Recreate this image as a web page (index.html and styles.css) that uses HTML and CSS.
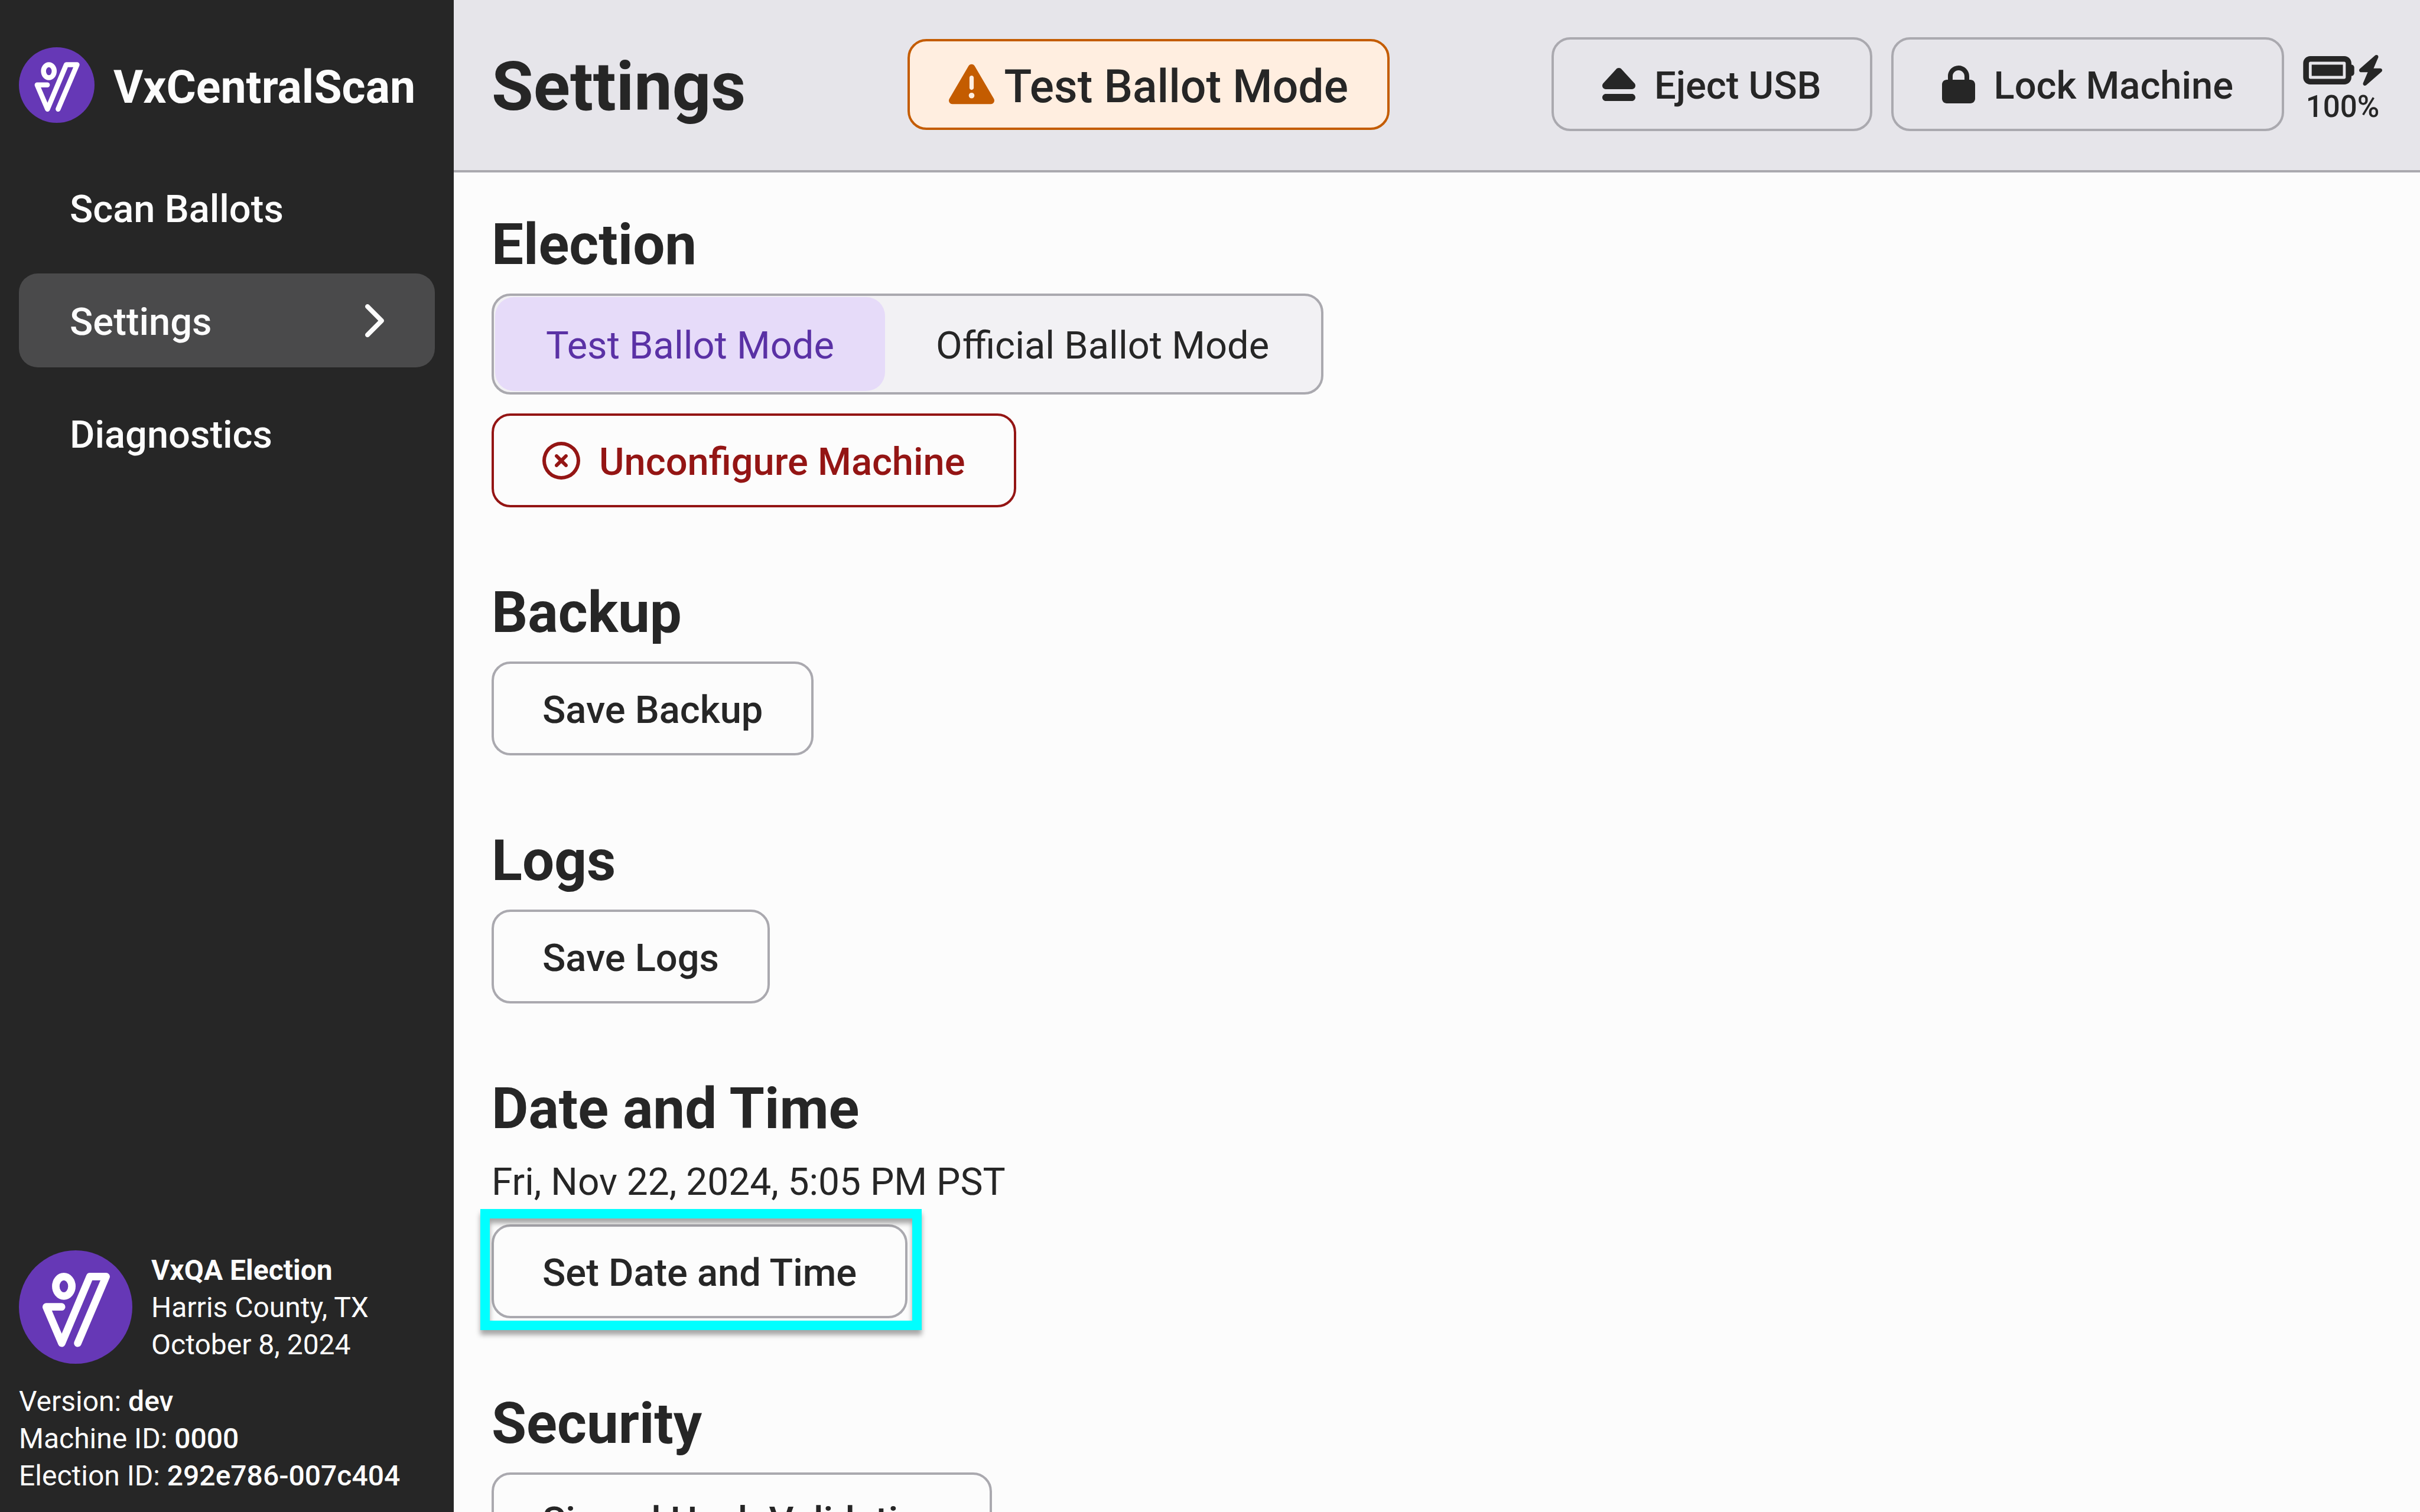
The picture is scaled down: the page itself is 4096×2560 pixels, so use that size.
FILE: index.html
```html
<!DOCTYPE html>
<html lang="en">
<head>
<meta charset="utf-8">
<title>VxCentralScan – Settings</title>
<link rel="stylesheet" href="styles.css">
</head>
<body>
<svg class="defs" aria-hidden="true">
  <symbol id="logo" viewBox="30 37 606 606">
    <circle cx="333" cy="340" r="303" fill="#6638b6"/>
    <g fill="none" stroke="#fff" stroke-width="40" stroke-linecap="round" stroke-linejoin="round">
      <ellipse cx="270" cy="229" rx="43" ry="52"/>
      <path d="M258 339H176L259 533L409 177H496L344 533"/>
    </g>
  </symbol>
</svg>
<div class="app">
  <aside class="sidebar">
    <div class="brand">
      <svg class="brand-logo" aria-hidden="true"><use href="#logo"/></svg>
      <span class="brand-name">VxCentralScan</span>
    </div>
    <nav class="nav">
      <a class="nav-item" href="#scan"><span class="label">Scan Ballots</span></a>
      <a class="nav-item nav-item-active" href="#settings" aria-current="page"><span class="label">Settings</span>
        <svg class="chevron" viewBox="0 0 320 512" aria-hidden="true"><path d="M310.6 233.4c12.5 12.5 12.5 32.8 0 45.3l-192 192c-12.5 12.5-32.8 12.5-45.3 0s-12.5-32.8 0-45.3L242.7 256 73.4 86.6c-12.5-12.5-12.5-32.8 0-45.3s32.8-12.5 45.3 0l192 192z"/></svg>
      </a>
      <a class="nav-item" href="#diagnostics"><span class="label">Diagnostics</span></a>
    </nav>
    <footer class="info">
      <div class="election">
        <svg class="election-seal" aria-hidden="true"><use href="#logo"/></svg>
        <div>
          <div><b>VxQA Election</b></div>
          <div>Harris County, TX</div>
          <div>October 8, 2024</div>
        </div>
      </div>
      <div>
        <div>Version: <strong>dev</strong></div>
        <div>Machine ID: <strong>0000</strong></div>
        <div>Election ID: <strong>292e786-007c404</strong></div>
      </div>
    </footer>
  </aside>
  <div class="screen">
    <header class="header">
      <h1 class="title">Settings</h1>
      <div class="mode-badge">
        <svg class="warning" viewBox="0 0 512 512" aria-hidden="true"><path d="M256 32c14.2 0 27.3 7.5 34.5 19.8l216 368c7.3 12.4 7.3 27.7 .2 40.1S486.3 480 472 480H40c-14.3 0-27.6-7.7-34.7-20.1s-7-27.8 .2-40.1l216-368C228.7 39.5 241.8 32 256 32zm0 128c-13.3 0-24 10.7-24 24V296c0 13.3 10.7 24 24 24s24-10.7 24-24V184c0-13.3-10.7-24-24-24zm32 224a32 32 0 1 0 -64 0 32 32 0 1 0 64 0z"/></svg>
        <span class="mode-name">Test Ballot Mode</span>
      </div>
      <div class="actions">
        <button class="button" type="button">
          <svg class="icon-narrow" viewBox="0 0 448 512" aria-hidden="true"><path d="M224 32c13.5 0 26.3 5.6 35.4 15.6l176 192c12.9 14 16.2 34.3 8.6 51.8S419 320 400 320H48c-19 0-36.3-11.2-43.9-28.7s-4.3-37.7 8.6-51.8l176-192C197.7 37.6 210.5 32 224 32zM0 432c0-26.5 21.5-48 48-48H400c26.5 0 48 21.5 48 48s-21.5 48-48 48H48c-26.5 0-48-21.5-48-48z"/></svg>
          <span class="label">Eject USB</span>
        </button>
        <button class="button" type="button">
          <svg class="icon-narrow" viewBox="0 0 448 512" aria-hidden="true"><path d="M144 144v48H304V144c0-44.2-35.8-80-80-80s-80 35.8-80 80zM80 192V144C80 64.5 144.5 0 224 0s144 64.5 144 144v48h16c35.3 0 64 28.7 64 64V448c0 35.3-28.7 64-64 64H64c-35.3 0-64-28.7-64-64V256c0-35.3 28.7-64 64-64H80z"/></svg>
          <span class="label">Lock Machine</span>
        </button>
        <div class="power">
          <div class="power-icons">
            <svg class="battery" viewBox="0 96 576 320" aria-hidden="true"><path d="M464 160c8.800 0 16 7.200 16 16V336c0 8.800-7.200 16-16 16H80c-8.800 0-16-7.200-16-16V176c0-8.800 7.200-16 16-16H464zM80 96C35.800 96 0 131.800 0 176V336c0 44.200 35.800 80 80 80H464c44.200 0 80-35.800 80-80V320c17.700 0 32-14.300 32-32V224c0-17.700-14.300-32-32-32V176c0-44.200-35.800-80-80-80H80zm368 96H96V320H448V192z"/></svg>
            <svg class="bolt" viewBox="32 0 384 512" aria-hidden="true"><path d="M349.4 44.6c5.9-13.7 1.5-29.7-10.6-38.5s-28.6-8-39.9 1.8l-256 224c-10 8.8-13.6 22.9-8.9 35.3S50.7 288 64 288H175.500L98.6 467.4c-5.9 13.7-1.5 29.7 10.6 38.5s28.6 8 39.9-1.8l256-224c10-8.8 13.6-22.9 8.900-35.300s-16.600-20.700-30-20.700H272.500L349.400 44.600z"/></svg>
          </div>
          <span>100%</span>
        </div>
      </div>
    </header>
    <main class="content">
      <section class="section">
        <h2 class="heading">Election</h2>
        <div class="stack">
          <div class="segmented" role="radiogroup" aria-label="Ballot mode">
            <label class="segment"><input class="segment-input" type="radio" name="mode" checked><span class="label">Test Ballot Mode</span></label>
            <label class="segment"><input class="segment-input" type="radio" name="mode"><span class="label">Official Ballot Mode</span></label>
          </div>
          <button class="button button-danger" type="button">
            <svg class="icon" viewBox="0 0 512 512" aria-hidden="true"><path d="M256 48a208 208 0 1 1 0 416 208 208 0 1 1 0-416zm0 464A256 256 0 1 0 256 0a256 256 0 1 0 0 512zM175 175c-9.400 9.400-9.400 24.600 0 33.900l47 47-47 47c-9.400 9.400-9.400 24.600 0 33.900s24.600 9.400 33.900 0l47-47 47 47c9.400 9.400 24.600 9.400 33.900 0s9.400-24.600 0-33.900l-47-47 47-47c9.400-9.400 9.400-24.600 0-33.900s-24.600-9.400-33.900 0l-47 47-47-47c-9.400-9.400-24.600-9.400-33.900 0z"/></svg>
            <span class="label">Unconfigure Machine</span>
          </button>
        </div>
      </section>
      <section class="section">
        <h2 class="heading">Backup</h2>
        <button class="button" type="button"><span class="label">Save Backup</span></button>
      </section>
      <section class="section">
        <h2 class="heading">Logs</h2>
        <button class="button" type="button"><span class="label">Save Logs</span></button>
      </section>
      <section class="section">
        <h2 class="heading">Date and Time</h2>
        <p class="clock">Fri, Nov 22, 2024, 5:05 PM PST</p>
        <div class="highlight">
          <button class="button" type="button"><span class="label">Set Date and Time</span></button>
        </div>
      </section>
      <section class="section">
        <h2 class="heading">Security</h2>
        <button class="button" type="button"><span class="label">Signed Hash Validation</span></button>
      </section>
    </main>
  </div>
</div>
</body>
</html>
```
FILE: styles.css
```css
* {
  box-sizing: border-box;
}

body {
  margin: 0;
  font-family: Roboto, "Noto Sans", sans-serif;
  font-size: 64px;
  line-height: 75px;
  color: #262626;
  background: #fcfcfc;
}

svg {
  display: block;
  flex: none;
  fill: currentColor;
}

.defs {
  position: absolute;
  width: 0;
  height: 0;
}

.app {
  display: flex;
  height: 100vh;
  overflow: hidden;
}

/* Sidebar */

.sidebar {
  display: flex;
  flex-direction: column;
  flex: none;
  width: 768px;
  padding: 80px 32px 30px;
  color: #fcfcfc;
  background: #262626;
}

.brand {
  display: flex;
  align-items: center;
  gap: 32px;
  margin-bottom: 64px;
}

.brand-logo {
  width: 128px;
  height: 128px;
}

.brand-name {
  padding-top: 8px;
  font-size: 77px;
  font-weight: 700;
  line-height: 92px;
}

.nav {
  display: flex;
  flex-direction: column;
  gap: 32px;
}

.nav-item {
  display: flex;
  align-items: center;
  justify-content: space-between;
  padding: 42px 86px;
  border-radius: 32px;
  font-weight: 500;
  color: inherit;
  text-decoration: none;
}

.nav-item-active {
  background: #4a4a4b;
}

.chevron {
  width: 40px;
  height: 64px;
}

.info {
  display: flex;
  flex-direction: column;
  gap: 32px;
  margin-top: auto;
  font-size: 48px;
  line-height: 63px;
}

.info b {
  font-weight: 700;
}

.info strong {
  font-weight: 500;
}

.election {
  display: flex;
  align-items: center;
  gap: 32px;
}

.election-seal {
  width: 192px;
  height: 192px;
}

/* Header */

.screen {
  display: flex;
  flex-direction: column;
  flex: 1;
  min-width: 0;
}

.header {
  display: flex;
  align-items: center;
  justify-content: space-between;
  flex: none;
  padding: 63px 64px 66px;
  border-bottom: 4px solid #aaa9af;
  background: #e6e5ea;
}

.title {
  margin: 0;
  padding-top: 8px;
  font-size: 115px;
  font-weight: 700;
  line-height: 138px;
}

.mode-badge {
  display: flex;
  align-items: center;
  gap: 16px;
  padding: 23px 66px;
  border: 4px solid #c45c00;
  border-radius: 32px;
  font-size: 77px;
  font-weight: 500;
  line-height: 92px;
  background: #ffeee0;
}

.mode-name {
  padding-top: 8px;
}

.warning {
  width: 77px;
  height: 77px;
  color: #c45c00;
}

.actions {
  display: flex;
  align-items: center;
  gap: 32px;
}

.power {
  display: flex;
  flex-direction: column;
  align-items: center;
  gap: 6px;
  padding-top: 18px;
  font-size: 51px;
  font-weight: 500;
  line-height: 60px;
}

.power-icons {
  display: flex;
  align-items: center;
  gap: 8px;
}

.battery {
  width: 87px;
  height: 48px;
}

.bolt {
  width: 39px;
  height: 52px;
}

/* Controls */

.label {
  display: block;
  padding-top: 6px;
  font-size: 65px;
  line-height: 69px;
}

.button {
  display: inline-flex;
  align-items: center;
  gap: 32px;
  padding: 38px 82px;
  border: 4px solid #aaa9af;
  border-radius: 32px;
  font: inherit;
  font-weight: 500;
  white-space: nowrap;
  color: inherit;
  background: transparent;
}

.button-danger {
  border-color: #941514;
  color: #941514;
}

.icon {
  width: 64px;
  height: 64px;
}

.icon-narrow {
  width: 56px;
  height: 64px;
}

.segmented {
  display: flex;
  padding: 2px;
  border: 4px solid #aaa9af;
  border-radius: 32px;
  background: #f2f1f4;
}

.segment {
  position: relative;
  padding: 42px 86px;
  border-radius: 32px;
}

.segment:has(:checked) {
  color: #5a31a5;
  background: #e6dbf9;
}

.segment-input {
  position: absolute;
  inset: 0;
  width: 100%;
  height: 100%;
  margin: 0;
  opacity: 0;
}

/* Content */

.content {
  display: flex;
  flex-direction: column;
  gap: 120px;
  flex: 1;
  min-height: 0;
  padding: 64px;
  overflow: hidden;
}

.section {
  display: flex;
  flex-direction: column;
  align-items: flex-start;
  flex: none;
}

.heading {
  margin: 0 0 25px;
  font-size: 96px;
  font-weight: 700;
  line-height: 116px;
}

.stack {
  display: flex;
  flex-direction: column;
  align-items: flex-start;
  gap: 32px;
}

.clock {
  margin: 0 0 30px;
  line-height: 83px;
}

.highlight {
  position: relative;
}

.highlight::after {
  content: "";
  position: absolute;
  inset: -26px -24px -20px -19px;
  border: 16px solid #00ffff;
  filter: drop-shadow(0 8px 4px rgba(0, 0, 0, 0.35));
  pointer-events: none;
}
```
